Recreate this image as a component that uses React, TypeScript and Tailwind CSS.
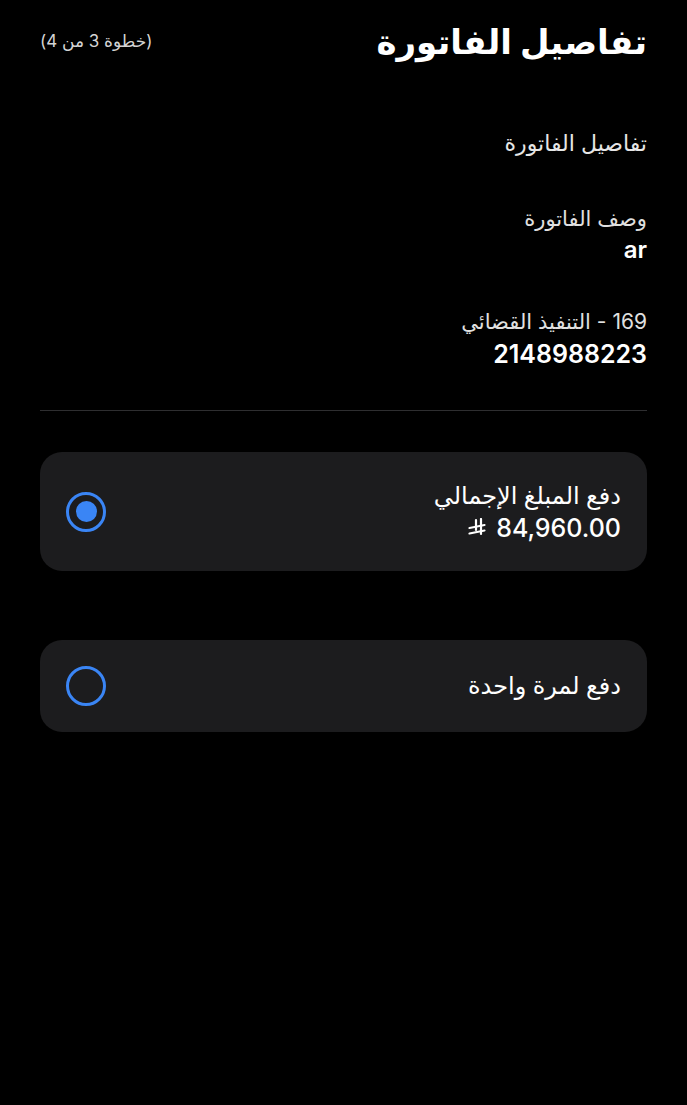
import { useState } from 'react';

function RiyalIcon() {
  return (
    <svg width="18" height="20" viewBox="0 0 18 20" fill="none" stroke="currentColor" strokeWidth="2.2" strokeLinecap="round">
      <path d="M8 2v10" />
      <path d="M13 1v15" />
      <path d="M1.5 10l15-3" />
      <path d="M1.5 15.5l15-3" />
    </svg>
  );
}

function Radio({ checked }: { checked: boolean }) {
  return (
    <span className="flex h-10 w-10 shrink-0 items-center justify-center rounded-full border-[3px] border-[#3a85f5]">
      {checked && <span className="h-[21px] w-[21px] rounded-full bg-[#3a85f5]" />}
    </span>
  );
}

export default function App() {
  const [choice, setChoice] = useState<'full' | 'once'>('full');

  return (
    <div
      dir="rtl"
      className="min-h-[1105px] w-full bg-black px-10 text-white"
      style={{ fontFamily: 'Inter, "DejaVu Sans", sans-serif' }}
    >
      {/* Header */}
      <div className="flex items-center justify-between pt-[18px]">
        <h1 className="text-[34px] font-bold leading-[48px]">تفاصيل الفاتورة</h1>
        <span className="text-[17px] text-[#d4d4d4]">(خطوة 3 من 4)</span>
      </div>

      {/* Invoice details */}
      <div className="mt-[62px] text-[22px] leading-[30px] text-[#e6e6e6]">تفاصيل الفاتورة</div>

      <div className="mt-[46px]">
        <div className="text-[21px] leading-[30px] text-[#e0e0e0]">وصف الفاتورة</div>
        <div className="mt-[1px] text-[24px] font-semibold leading-[30px]">ar</div>
      </div>

      <div className="mt-[42px]">
        <div className="text-[21px] leading-[30px] text-[#e0e0e0]">169 - التنفيذ القضائي</div>
        <div className="mt-[1px] text-[25px] font-semibold leading-[32px]">2148988223</div>
      </div>

      <div className="mt-[40px] h-px bg-[#2e2e30]" />

      {/* Payment options */}
      <button
        type="button"
        onClick={() => setChoice('full')}
        className="mt-[41px] flex h-[119px] w-full items-center justify-between rounded-[22px] bg-[#1c1c1e] pl-[26px] pr-[26px] text-right"
      >
        <div className="flex flex-col gap-[2px]">
          <span className="text-[24px] font-medium leading-[30px]">دفع المبلغ الإجمالي</span>
          <span className="flex items-center gap-[10px] text-[25px] font-medium leading-[30px]">
            <span dir="ltr">84,960.00</span>
            <RiyalIcon />
          </span>
        </div>
        <Radio checked={choice === 'full'} />
      </button>

      <button
        type="button"
        onClick={() => setChoice('once')}
        className="mt-[69px] flex h-[92px] w-full items-center justify-between rounded-[22px] bg-[#1c1c1e] pl-[26px] pr-[26px] text-right"
      >
        <span className="text-[24px] font-medium leading-[30px]">دفع لمرة واحدة</span>
        <Radio checked={choice === 'once'} />
      </button>
    </div>
  );
}
